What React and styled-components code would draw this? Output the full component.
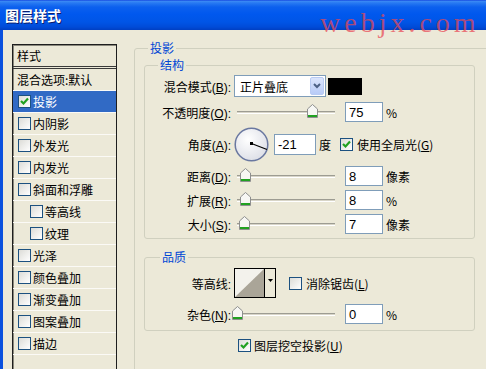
import React from "react";
import styled, { createGlobalStyle } from "styled-components";

const GlobalStyle = createGlobalStyle`
  html, body { margin: 0; padding: 0; }
  body {
    width: 486px;
    height: 369px;
    overflow: hidden;
    background: #ece9d8;
    font-family: "Liberation Sans", "Noto Sans CJK SC", sans-serif;
    font-size: 12px;
    color: #000;
  }
  * { box-sizing: border-box; }
`;

const Window = styled.div`
  position: relative;
  width: 486px;
  height: 369px;
  display: flex;
  flex-direction: column;
  overflow: hidden;
`;

const TitleBar = styled.div`
  height: 30px;
  flex: none;
  display: flex;
  align-items: center;
  padding-left: 5px;
  background: linear-gradient(
    #0831d9 0,
    #3d8cf5 1px,
    #2779f2 3px,
    #0c60ee 7px,
    #0058ee 14px,
    #0055e6 22px,
    #004bd8 27px,
    #003fc2 30px
  );
  color: #fff;
  font-family: "Noto Sans CJK SC", sans-serif;
  font-weight: bold;
  font-size: 14px;
  text-shadow: 1px 1px #0a1e6e;
`;

const Watermark = styled.div`
  position: absolute;
  top: 7px;
  left: 320px;
  font-family: "Liberation Serif", serif;
  font-size: 28px;
  letter-spacing: 4px;
  color: rgba(232, 72, 84, 0.72);
`;

const Body = styled.div`
  flex: 1;
  min-height: 0;
  display: flex;
  align-items: flex-start;
  border-left: 3px solid #0a50de;
  padding: 11px 0 0 9px;
  overflow: hidden;
`;

/* ---------- style list ---------- */

const StyleList = styled.div`
  flex: none;
  width: 105px;
  height: 330px;
  margin-top: 3px;
  border: 1px solid #1e1e1e;
  box-shadow: inset 1px 1px #8a887c;
  font-family: "Noto Sans CJK SC", sans-serif;
`;

const ListHeader = styled.div`
  height: 24px;
  padding-left: 4px;
  display: flex;
  align-items: center;
  border-bottom: 3px double #3a3a3a;
`;

const ListRow = styled.div`
  height: 22px;
  display: flex;
  align-items: center;
  gap: 2px;
  padding-left: ${(p) => (p.$plain ? 4 : 5 + (p.$indent ? 12 : 0))}px;
  border-bottom: 1px solid #fbfaf6;
  background: ${(p) => (p.$selected ? "#316ac5" : "transparent")};
  color: ${(p) => (p.$selected ? "#fff" : "#000")};
`;

/* ---------- checkbox ---------- */

const Box = styled.span`
  flex: none;
  width: 13px;
  height: 13px;
  border: 1px solid #1c5180;
  background: linear-gradient(135deg, #dcdcd7, #ffffff);
  display: inline-flex;
  align-items: center;
  justify-content: center;
  margin-left: ${(p) => p.$ml || 0}px;
`;

const Checkbox = ({ checked, ml }) => (
  <Box $ml={ml}>
    {checked && (
      <svg width="11" height="11" viewBox="0 0 11 11">
        <path d="M2 5 L4.5 7.5 L9 2.5" fill="none" stroke="#21a121" strokeWidth="2.2" />
      </svg>
    )}
  </Box>
);

/* ---------- groups ---------- */

const RightPanel = styled.div`
  margin-left: 17px;
  flex: none;
`;

const Group = styled.fieldset`
  margin: 0;
  min-width: 0;
  width: ${(p) => p.$w}px;
  height: ${(p) => (p.$h ? `${p.$h}px` : "auto")};
  margin-top: ${(p) => p.$mt || 0}px;
  border: 1px solid #d0d0bf;
  border-radius: 3px;
  padding: ${(p) => p.$pad};
`;

const Legend = styled.legend`
  font-family: "Noto Sans CJK SC", sans-serif;
  color: #0046d5;
  font-size: 12px;
  line-height: 14px;
  padding: 0 2px;
  margin-left: ${(p) => p.$ml}px;
`;

const Row = styled.div`
  display: grid;
  grid-template-columns: 86px auto;
  column-gap: 3px;
  align-items: center;
  height: ${(p) => p.$h}px;
  margin-top: ${(p) => p.$mt || 0}px;
`;

const Label = styled.label`
  text-align: right;
  white-space: nowrap;
`;

const Controls = styled.div`
  display: flex;
  align-items: center;
  white-space: nowrap;
`;

const Select = styled.div`
  width: 92px;
  height: 22px;
  border: 1px solid #7f9db9;
  background: #fff;
  display: flex;
  align-items: center;
  justify-content: space-between;
  padding: 1px 1px 1px 5px;
  font-family: "Noto Sans CJK SC", sans-serif;
`;

const SelectButton = styled.span`
  width: 14px;
  height: 18px;
  border: 1px solid #b9cbf3;
  border-radius: 2px;
  background: linear-gradient(#dbe5fc, #b8cbf7);
  display: flex;
  align-items: center;
  justify-content: center;
`;

const Swatch = styled.span`
  width: 34px;
  height: 17px;
  margin-left: 2px;
  background: #000;
`;

const SliderWrap = styled.div`
  position: relative;
  width: 106px;
  height: 22px;
  flex: none;
`;

const Track = styled.div`
  position: absolute;
  left: 3px;
  right: 5px;
  top: 10px;
  height: 3px;
  border-top: 1px solid #9d9c92;
  border-bottom: 1px solid #ffffff;
  background: #d8d5c8;
`;

const Thumb = styled.svg`
  position: absolute;
  top: 3px;
`;

const Slider = ({ pos }) => (
  <SliderWrap>
    <Track />
    <Thumb width="11" height="14" viewBox="0 0 11 14" style={{ left: pos - 5 }}>
      <path d="M0.5 5 L5.5 0.5 L10.5 5 V13.5 H0.5 Z" fill="#f7f7f4" stroke="#8e8f8f" />
      <rect x="1" y="11" width="9" height="2" fill="#21a121" />
    </Thumb>
  </SliderWrap>
);

const NumInput = styled.div`
  width: ${(p) => p.$w || 38}px;
  height: ${(p) => p.$h || 20}px;
  margin-left: ${(p) => p.$ml || 0}px;
  border: 1px solid #7f9db9;
  background: #fff;
  display: flex;
  align-items: center;
  padding-left: 3px;
  font-size: 13px;
`;

const Unit = styled.span`
  margin-left: 3px;
  font-family: "Noto Sans CJK SC", "Liberation Sans", sans-serif;
`;

const CheckText = styled.span`
  margin-left: ${(p) => p.$ml || 4}px;
  font-family: "Noto Sans CJK SC", sans-serif;
`;

const Dial = () => (
  <svg width="35" height="35" viewBox="0 0 35 35">
    <defs>
      <radialGradient id="dialFill" cx="0.4" cy="0.35" r="0.7">
        <stop offset="0" stopColor="#ffffff" />
        <stop offset="1" stopColor="#dcdee6" />
      </radialGradient>
    </defs>
    <circle cx="17.5" cy="17.5" r="16.3" fill="url(#dialFill)" stroke="#6a78a0" strokeWidth="1.5" />
    <line x1="17.5" y1="16.5" x2="33" y2="22.5" stroke="#000" strokeWidth="1.2" />
    <rect x="16" y="15" width="3" height="3" fill="#000" />
  </svg>
);

const Contour = styled.div`
  display: flex;
  width: 42px;
  height: 30px;
  border: 1px solid #000;
  background: #f3f2ec;
`;

const ContourButton = styled.div`
  width: 11px;
  border-left: 1px solid #000;
  background: #ece9d8;
  display: flex;
  justify-content: center;
  padding-top: 10px;
`;

const FooterRow = styled.div`
  display: flex;
  align-items: center;
  height: 18px;
  margin-top: 5px;
  padding-left: 94px;
`;

const U = styled.u`
  text-decoration: underline;
`;

const styles = [
  { name: "投影", checked: true, selected: true },
  { name: "内阴影" },
  { name: "外发光" },
  { name: "内发光" },
  { name: "斜面和浮雕" },
  { name: "等高线", indent: true },
  { name: "纹理", indent: true },
  { name: "光泽" },
  { name: "颜色叠加" },
  { name: "渐变叠加" },
  { name: "图案叠加" },
  { name: "描边" },
];

const sliders = [
  { label: "距离", key: "D", pos: 11, value: "8", unit: "像素" },
  { label: "扩展", key: "R", pos: 11, value: "8", unit: "%" },
  { label: "大小", key: "S", pos: 10, value: "7", unit: "像素" },
];

export default function App() {
  return (
    <Window>
      <GlobalStyle />
      <TitleBar>图层样式</TitleBar>
      <Watermark>webjx.com</Watermark>
      <Body>
        <StyleList>
          <ListHeader>样式</ListHeader>
          <ListRow $plain>混合选项:默认</ListRow>
          {styles.map((s) => (
            <ListRow key={s.name} $selected={s.selected} $indent={s.indent}>
              <Checkbox checked={s.checked} />
              {s.name}
            </ListRow>
          ))}
        </StyleList>

        <RightPanel>
          <Group $w={360} $h={340} $pad="3px 0 0 9px">
            <Legend $ml={4}>投影</Legend>

            <Group $w={331} $pad="3px 0 2px 0">
              <Legend $ml={13}>结构</Legend>
              <Row $h={22}>
                <Label>
                  混合模式(<U>B</U>):
                </Label>
                <Controls>
                  <Select>
                    正片叠底
                    <SelectButton>
                      <svg width="8" height="6" viewBox="0 0 8 6">
                        <path d="M1 1 L4 4 L7 1" fill="none" stroke="#4d6185" strokeWidth="2" />
                      </svg>
                    </SelectButton>
                  </Select>
                  <Swatch />
                </Controls>
              </Row>
              <Row $h={24} $mt={3}>
                <Label>
                  不透明度(<U>O</U>):
                </Label>
                <Controls>
                  <Slider pos={78} />
                  <NumInput $ml={5}>75</NumInput>
                  <Unit>%</Unit>
                </Controls>
              </Row>
              <Row $h={40}>
                <Label>
                  角度(<U>A</U>):
                </Label>
                <Controls>
                  <Dial />
                  <NumInput $w={42} $h={21} $ml={5}>
                    -21
                  </NumInput>
                  <Unit>度</Unit>
                  <Checkbox checked ml={9} />
                  <CheckText>
                    使用全局光(<U>G</U>)
                  </CheckText>
                </Controls>
              </Row>
              {sliders.map((s) => (
                <Row $h={24} key={s.key}>
                  <Label>
                    {s.label}(<U>{s.key}</U>):
                  </Label>
                  <Controls>
                    <Slider pos={s.pos} />
                    <NumInput $ml={5}>{s.value}</NumInput>
                    <Unit>{s.unit}</Unit>
                  </Controls>
                </Row>
              ))}
            </Group>

            <Group $w={331} $mt={11} $pad="2px 0 4px 0">
              <Legend $ml={15}>品质</Legend>
              <Row $h={34}>
                <Label>等高线:</Label>
                <Controls>
                  <Contour>
                    <svg width="29" height="28" viewBox="0 0 29 28" style={{ display: "block" }}>
                      <path d="M0 28 L29 0 L29 28 Z" fill="#aaa598" />
                    </svg>
                    <ContourButton>
                      <svg width="5" height="3" viewBox="0 0 5 3">
                        <path d="M0 0 H5 L2.5 3 Z" fill="#000" />
                      </svg>
                    </ContourButton>
                  </Contour>
                  <Checkbox ml={13} />
                  <CheckText>
                    消除锯齿(<U>L</U>)
                  </CheckText>
                </Controls>
              </Row>
              <Row $h={24} $mt={2}>
                <Label>
                  杂色(<U>N</U>):
                </Label>
                <Controls>
                  <Slider pos={3} />
                  <NumInput $ml={5}>0</NumInput>
                  <Unit>%</Unit>
                </Controls>
              </Row>
            </Group>

            <FooterRow>
              <Checkbox checked />
              <CheckText $ml={3}>
                图层挖空投影(<U>U</U>)
              </CheckText>
            </FooterRow>
          </Group>
        </RightPanel>
      </Body>
    </Window>
  );
}
